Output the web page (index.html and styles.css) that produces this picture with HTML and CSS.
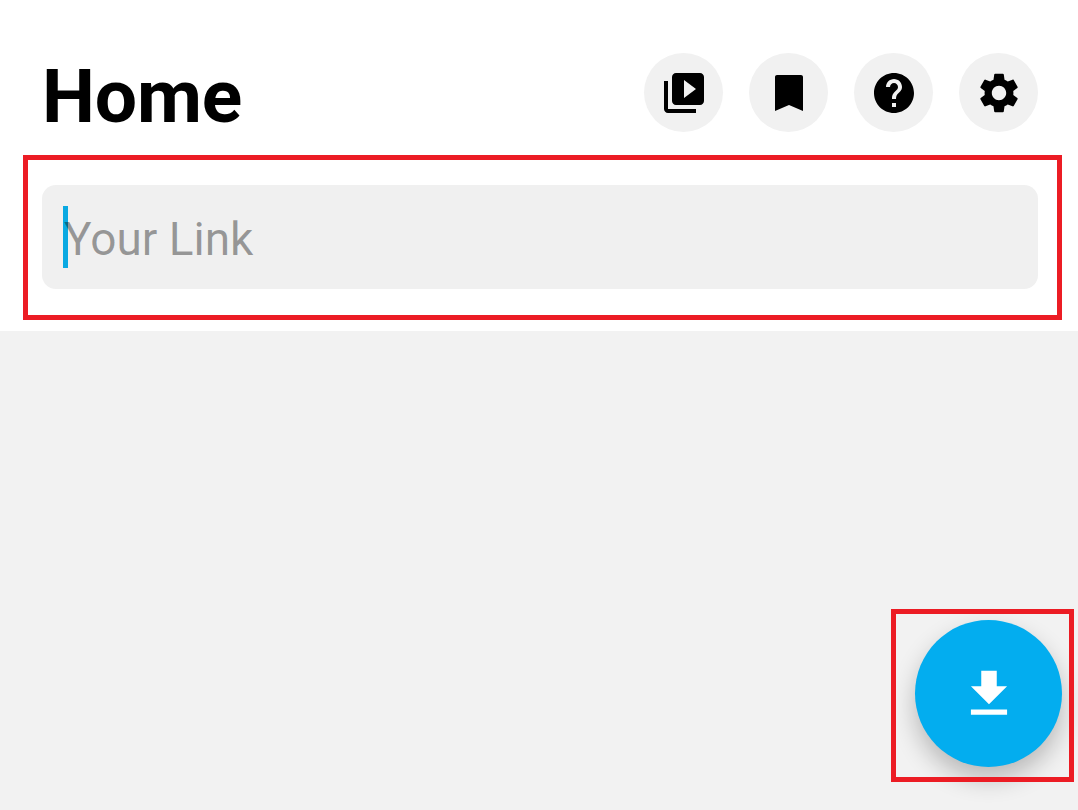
FILE: index.html
```html
<!DOCTYPE html>
<html lang="en">
<head>
    <meta charset="UTF-8">
    <meta name="viewport" content="width=device-width, initial-scale=1.0">
    <title>Home</title>
    <link rel="stylesheet" href="styles.css">
</head>
<body>
    <div class="screen">
        <header class="top">
            <div class="top-row">
                <h1>Home</h1>
                <div class="actions">
                    <button class="round-btn" aria-label="Videos">
                        <svg viewBox="0 0 24 24"><path d="M4 6H2v14c0 1.1.9 2 2 2h14v-2H4V6zm16-4H8c-1.1 0-2 .9-2 2v12c0 1.1.9 2 2 2h12c1.1 0 2-.9 2-2V4c0-1.1-.9-2-2-2zm-8 12.5v-9l6 4.5-6 4.5z"/></svg>
                    </button>
                    <button class="round-btn" aria-label="Bookmarks">
                        <svg viewBox="0 0 24 24"><path d="M18 3H6c-.55 0-1 .45-1 1v17l7-3 7 3V4c0-.55-.45-1-1-1z"/></svg>
                    </button>
                    <button class="round-btn" aria-label="Help">
                        <svg viewBox="0 0 24 24"><path d="M12 2C6.48 2 2 6.48 2 12s4.48 10 10 10 10-4.48 10-10S17.52 2 12 2zm1 17h-2v-2h2v2zm2.07-7.75l-.9.92C13.45 12.9 13 13.5 13 15h-2v-.5c0-1.1.45-2.1 1.17-2.83l1.24-1.26c.37-.36.59-.86.59-1.41 0-1.1-.9-2-2-2s-2 .9-2 2H8c0-2.21 1.79-4 4-4s4 1.79 4 4c0 .88-.36 1.68-.93 2.25z"/></svg>
                    </button>
                    <button class="round-btn" aria-label="Settings">
                        <svg viewBox="0 0 24 24"><path d="M19.14 12.94c.04-.3.06-.61.06-.94 0-.32-.02-.64-.07-.94l2.03-1.58c.18-.14.23-.41.12-.61l-1.92-3.32c-.12-.22-.37-.29-.59-.22l-2.39.96c-.5-.38-1.03-.7-1.62-.94l-.36-2.54c-.04-.24-.24-.41-.48-.41h-3.84c-.24 0-.43.17-.47.41l-.36 2.54c-.59.24-1.13.57-1.62.94l-2.39-.96c-.22-.08-.47 0-.59.22L2.74 8.87c-.12.21-.08.47.12.61l2.03 1.58c-.05.3-.09.63-.09.94s.02.64.07.94l-2.03 1.58c-.18.14-.23.41-.12.61l1.92 3.32c.12.22.37.29.59.22l2.39-.96c.5.38 1.03.7 1.62.94l.36 2.54c.05.24.24.41.48.41h3.84c.24 0 .44-.17.47-.41l.36-2.54c.59-.24 1.13-.56 1.62-.94l2.39.96c.22.08.47 0 .59-.22l1.92-3.32c.12-.22.07-.47-.12-.61l-2.01-1.58zM12 15.6c-1.98 0-3.6-1.62-3.6-3.6s1.62-3.6 3.6-3.6 3.6 1.62 3.6 3.6-1.62 3.6-3.6 3.6z"/></svg>
                    </button>
                </div>
            </div>
            <div class="link-field">
                <span class="caret"></span>
                <span class="placeholder">Your Link</span>
            </div>
        </header>

        <main class="content"></main>

        <button class="fab" aria-label="Download">
            <svg viewBox="0 0 24 24"><path d="M19 9h-4V3H9v6H5l7 7 7-7zM5 18v2h14v-2H5z"/></svg>
        </button>

        <!-- red marks drawn over the screenshot -->
        <div class="mark mark-field"></div>
        <div class="mark mark-fab"></div>
    </div>
</body>
</html>
```

FILE: styles.css
```css
html, body {
    margin: 0;
    padding: 0;
}
body {
    font-family: Roboto, "Liberation Sans", sans-serif;
    background-color: #f2f2f2;
}
.screen {
    position: relative;
    display: flex;
    flex-direction: column;
    width: 1078px;
    height: 810px;
    overflow: hidden;
}
.top {
    background: #fff;
    padding: 53px 40px 42px 42px;
}
.top-row {
    display: flex;
    justify-content: space-between;
    align-items: center;
    height: 79px;
    margin-bottom: 53px;
}
h1 {
    margin: 8px 0 0;
    font-size: 75px;
    font-weight: 700;
    letter-spacing: -0.2px;
    line-height: 79px;
    color: #000;
}
.actions {
    display: flex;
    gap: 26px;
}
.round-btn {
    display: flex;
    align-items: center;
    justify-content: center;
    width: 79px;
    height: 79px;
    padding: 0;
    border: none;
    border-radius: 50%;
    background: #f1f1f1;
}
.round-btn svg {
    width: 48px;
    height: 48px;
    fill: #000;
}
.link-field {
    position: relative;
    display: flex;
    align-items: center;
    height: 104px;
    padding-left: 22px;
    border-radius: 14px;
    background: #f0f0f0;
}
.caret {
    position: absolute;
    left: 21px;
    top: 21px;
    width: 5px;
    height: 62px;
    background: #0aa9e2;
}
.placeholder {
    position: relative;
    top: 2px;
    font-size: 46px;
    color: rgba(0, 0, 0, 0.38);
}
.content {
    flex: 1;
}
.fab {
    position: absolute;
    left: 915px;
    top: 620px;
    display: flex;
    align-items: center;
    justify-content: center;
    width: 147px;
    height: 147px;
    padding: 0;
    border: none;
    border-radius: 50%;
    background: #03adef;
    box-shadow: 0 12px 24px rgba(0, 0, 0, 0.24);
}
.fab svg {
    width: 62px;
    height: 62px;
    fill: #fff;
}
.mark {
    position: absolute;
    box-sizing: border-box;
    border: 5px solid #ec1c24;
}
.mark-field {
    left: 23px;
    top: 155px;
    width: 1039px;
    height: 165px;
}
.mark-fab {
    left: 891px;
    top: 609px;
    width: 183px;
    height: 173px;
}
```
